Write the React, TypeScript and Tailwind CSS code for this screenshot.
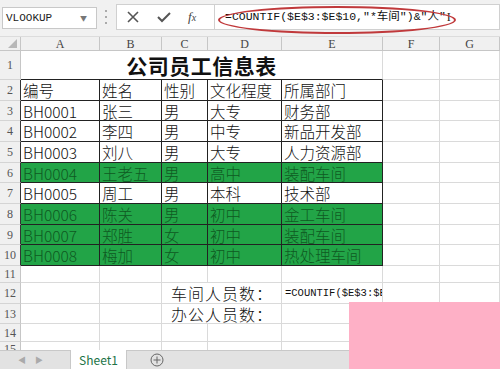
import React from "react";

const FONT = { fontFamily: '"Noto Sans CJK SC", "Noto Sans", sans-serif' };
const SERIF = { fontFamily: '"Liberation Serif", "Noto Sans CJK SC", serif' };
const MONO = { fontFamily: '"Liberation Mono", "Noto Sans CJK SC", monospace' };

const W = ["w-[79px]", "w-[62px]", "w-[46px]", "w-[74px]", "w-[101px]", "w-[57px]", "w-[60px]"];

function RowHead({ n, dark }: { n: number; dark?: boolean }) {
  return (
    <div
      className={`w-[21px] shrink-0 bg-[#f0f0f0] border-b border-b-[#d4d4d4] border-r ${
        dark ? "border-r-[#333]" : "border-r-[#c6c6c6]"
      } flex items-center justify-center text-[12px] text-[#555]`}
      style={SERIF}
    >
      {n}
    </div>
  );
}

function Cell({ w, cls, children }: { w: string; cls?: string; children?: React.ReactNode }) {
  return (
    <div className={`${w} shrink-0 border-r border-b flex items-center whitespace-nowrap ${cls ?? "border-[#dadada]"}`}>
      {children}
    </div>
  );
}

const data: [string, string, string, string, string, boolean][] = [
  ["编号", "姓名", "性别", "文化程度", "所属部门", false],
  ["BH0001", "张三", "男", "大专", "财务部", false],
  ["BH0002", "李四", "男", "中专", "新品开发部", false],
  ["BH0003", "刘八", "男", "大专", "人力资源部", false],
  ["BH0004", "王老五", "男", "高中", "装配车间", true],
  ["BH0005", "周工", "男", "本科", "技术部", false],
  ["BH0006", "陈关", "男", "初中", "金工车间", true],
  ["BH0007", "郑胜", "女", "初中", "装配车间", true],
  ["BH0008", "梅加", "女", "初中", "热处理车间", true],
];
const heights = ["h-[21px]", "h-[20px]", "h-[21px]", "h-[21px]", "h-[20px]", "h-[21px]", "h-[21px]", "h-[20px]", "h-[21px]"];

function PlainRow({ n, h }: { n: number; h: string }) {
  return (
    <div className={`flex ${h}`}>
      <RowHead n={n} />
      {W.map((w, i) => (
        <Cell key={i} w={w} />
      ))}
    </div>
  );
}

export default function App() {
  return (
    <div className="w-[500px] h-[369px] relative overflow-hidden bg-white text-[#111]" style={FONT}>
      {/* toolbar */}
      <div className="h-[37px] bg-[#f1f1f1] flex items-start relative border-b border-[#dcdcdc]">
        <div className="mt-[7px] ml-[2px] w-[95px] h-[22px] bg-white border border-[#c8c8c8] flex items-center justify-between pl-[3px]">
          <span className="text-[11px] text-[#222]" style={MONO}>VLOOKUP</span>
          <span className="text-[7px] text-[#777] mr-[9px]">▼</span>
        </div>
        <div className="mt-[10px] ml-[8px] w-[2px] h-[14px] flex flex-col justify-between">
          <div className="w-[2px] h-[2px] bg-[#aaa]" />
          <div className="w-[2px] h-[2px] bg-[#aaa]" />
          <div className="w-[2px] h-[2px] bg-[#aaa]" />
        </div>
        <div className="mt-[4px] ml-[9px] w-[99px] h-[26px] bg-white border border-[#d0d0d0] flex items-center">
          <svg width="14" height="14" viewBox="0 0 14 14" className="ml-[9px]">
            <path d="M2 2 L12 12 M12 2 L2 12" stroke="#555" strokeWidth="1.6" />
          </svg>
          <svg width="16" height="14" viewBox="0 0 16 14" className="ml-[16px]">
            <path d="M2 7 L6 11 L14 3" stroke="#555" strokeWidth="2" fill="none" />
          </svg>
          <span className="ml-[16px] text-[13px] italic text-[#444]" style={SERIF}>
            f<span className="text-[10px]">x</span>
          </span>
        </div>
        <div className="mt-[4px] flex-1 h-[26px] bg-white border border-[#d0d0d0] border-l-0 relative flex items-center">
          <span className="ml-[10px] text-[11.5px] text-[#111]" style={MONO}>
            =COUNTIF($E$3:$E$10,"*车间")&"人"
          </span>
          <span className="ml-[1px] text-[12px] text-[#222]" style={SERIF}>I</span>
          <div className="absolute left-[3px] top-[1px] w-[238px] h-[28px] rounded-[50%] border-2 border-[#c0393b]" />
        </div>
      </div>

      {/* column headers */}
      <div className="flex h-[14px] bg-[#f0f0f0]">
        <div className="w-[21px] shrink-0 border-r border-b border-[#c6c6c6] relative">
          <div className="absolute right-[3px] bottom-[2px] w-0 h-0 border-l-[9px] border-l-transparent border-b-[9px] border-b-[#b8b8b8]" />
        </div>
        {["A", "B", "C", "D", "E", "F", "G"].map((c, i) => (
          <div
            key={c}
            className={`${W[i]} shrink-0 border-r border-b border-[#c6c6c6] flex items-center justify-center text-[12px] text-[#444]`}
            style={SERIF}
          >
            {c}
          </div>
        ))}
      </div>

      {/* row 1 */}
      <div className="flex h-[29px]">
        <RowHead n={1} />
        <div className="w-[362px] shrink-0 border-b border-b-[#222] border-r border-r-[#dadada] flex items-end justify-center">
          <span className="text-[21px] font-bold leading-[27px] tracking-[0.5px]">公司员工信息表</span>
        </div>
        <Cell w={W[5]} />
        <Cell w={W[6]} />
      </div>

      {/* rows 2-10 */}
      {data.map((r, idx) => {
        const green = r[5];
        const cls = `border-[#222] ${green ? "bg-[#22a447] text-[#0f5a22]" : ""}`;
        return (
          <div key={idx} className={`flex ${heights[idx]}`}>
            <RowHead n={idx + 2} dark />
            {r.slice(0, 5).map((t, i) => (
              <Cell key={i} w={W[i]} cls={cls}>
                <span className="pl-[2px] text-[15.5px] leading-[18px] font-light">{t as string}</span>
              </Cell>
            ))}
            <Cell w={W[5]} />
            <Cell w={W[6]} />
          </div>
        );
      })}

      <PlainRow n={11} h="h-[17px]" />

      {/* row 12 */}
      <div className="flex h-[21px]">
        <RowHead n={12} />
        <Cell w={W[0]} />
        <Cell w={W[1]} />
        <Cell w="w-[120px]">
          <span className="pl-[9px] text-[16px] leading-[18px] tracking-[1px] font-light">车间人员数：</span>
        </Cell>
        <Cell w={W[4]} cls="border-[#dadada] overflow-hidden">
          <span className="pl-[3px] text-[10.5px] leading-[14px]" style={MONO}>=COUNTIF($E$3:$E$10</span>
        </Cell>
        <Cell w={W[5]} />
        <Cell w={W[6]} />
      </div>

      {/* row 13 */}
      <div className="flex h-[20px]">
        <RowHead n={13} />
        <Cell w={W[0]} />
        <Cell w={W[1]} />
        <Cell w="w-[120px]">
          <span className="pl-[9px] text-[16px] leading-[18px] tracking-[1px] font-light">办公人员数：</span>
        </Cell>
        <Cell w={W[4]} />
        <Cell w={W[5]} />
        <Cell w={W[6]} />
      </div>

      <PlainRow n={14} h="h-[18px]" />
      <div className="h-[8px] overflow-hidden">
        <div className="flex h-[18px] items-start">
          <div className="w-[21px] h-[18px] shrink-0 bg-[#f0f0f0] border-r border-[#c6c6c6] flex justify-center text-[12px] text-[#555] leading-[14px]" style={SERIF}>
            15
          </div>
          {W.map((w, i) => (
            <div key={i} className={`${w} h-[18px] shrink-0 border-r border-[#dadada]`} />
          ))}
        </div>
      </div>

      {/* tab bar */}
      <div className="h-[19px] bg-[#e2e2e2] border-t border-[#c8c8c8] flex items-stretch">
        <div className="w-[70px] flex items-center text-[8px] text-[#aaa]">
          <span className="ml-[18px]">◀</span>
          <span className="ml-[9px]">▶</span>
        </div>
        <div className="w-[57px] bg-white border-x border-[#c8c8c8] -mt-px flex items-center justify-center text-[12px] text-[#217346]" style={FONT}>
          Sheet1
        </div>
        <div className="ml-[23px] flex items-center">
          <svg width="14" height="14" viewBox="0 0 14 14">
            <circle cx="7" cy="7" r="6" stroke="#666" strokeWidth="1" fill="none" />
            <path d="M7 3.5 V10.5 M3.5 7 H10.5" stroke="#666" strokeWidth="1" />
          </svg>
        </div>
      </div>

      {/* pink overlay */}
      <div className="absolute left-[349px] top-[302px] right-0 bottom-0 bg-[#feb0c6]" />
    </div>
  );
}
